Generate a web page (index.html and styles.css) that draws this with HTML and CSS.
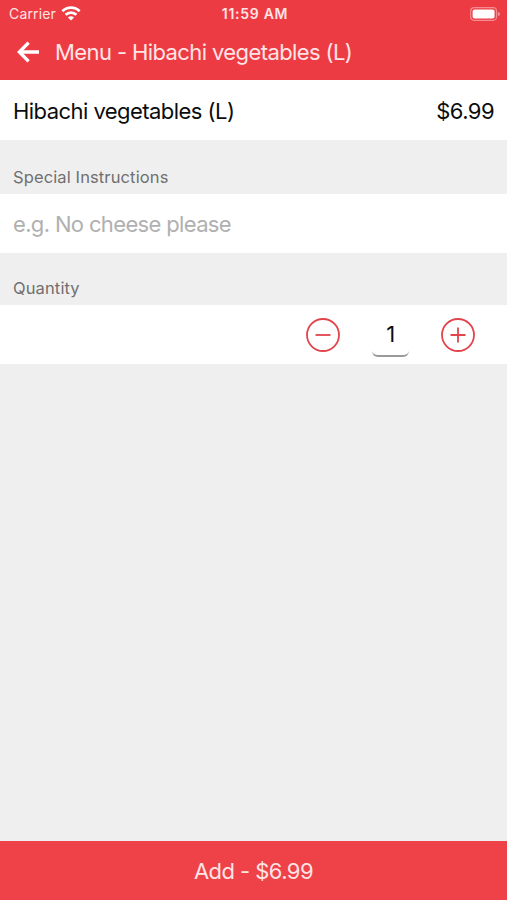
FILE: index.html
```html
<!DOCTYPE html>
<html lang="en">
<head>
    <meta charset="UTF-8">
    <meta name="viewport" content="width=device-width, initial-scale=1.0">
    <title>Menu - Hibachi vegetables (L)</title>
    <link rel="stylesheet" href="styles.css">
</head>
<body>
    <div class="screen">
        <header>
            <div class="status-bar">
                <div class="carrier">
                    <span>Carrier</span>
                    <svg class="wifi" width="20" height="15" viewBox="0 0 20 15" fill="none" stroke="#fff" stroke-width="2.7">
                        <path d="M1.4 5.2A12.3 12.3 0 0 1 18.6 5.2"/>
                        <path d="M4.6 8.8A7.8 7.8 0 0 1 15.4 8.8"/>
                        <path d="M10 14.5L6.9 11.5A4.4 4.4 0 0 1 13.1 11.5Z" fill="#fff" stroke="none"/>
                    </svg>
                </div>
                <span class="time">11:59 AM</span>
                <svg class="battery" width="31" height="14" viewBox="0 0 31 14">
                    <rect x="0.7" y="0.7" width="25.8" height="12.6" rx="3.5" fill="none" stroke="#f58c91" stroke-width="1.2"/>
                    <rect x="2.6" y="2.4" width="22" height="9.2" rx="2" fill="#fff"/>
                    <path d="M27.8 4.7Q30.2 5.6 30.2 7T27.8 9.3Z" fill="#f58c91"/>
                </svg>
            </div>
            <div class="nav-bar">
                <svg class="back" width="24" height="22" viewBox="0 0 24 22" fill="none" stroke="#fff" stroke-width="3.4">
                    <path d="M11.6 1.6L2.4 11L11.6 20.4M3 11H22"/>
                </svg>
                <h1>Menu - Hibachi vegetables (L)</h1>
            </div>
        </header>

        <main>
            <div class="row item">
                <span class="item-name">Hibachi vegetables (L)</span>
                <span class="item-price">$6.99</span>
            </div>

            <label class="label instructions-label" for="instructions">Special Instructions</label>
            <div class="row">
                <input type="text" id="instructions" class="instructions" placeholder="e.g. No cheese please">
            </div>

            <div class="label quantity-label">Quantity</div>
            <div class="row quantity">
                <button class="qty-btn" aria-label="Decrease">
                    <svg width="34" height="34" viewBox="0 0 34 34" fill="none" stroke="#e2444c" stroke-width="1.8">
                        <circle cx="17" cy="17" r="16"/>
                        <path d="M9.5 17H24.5"/>
                    </svg>
                </button>
                <span class="qty-value">1</span>
                <button class="qty-btn" aria-label="Increase">
                    <svg width="34" height="34" viewBox="0 0 34 34" fill="none" stroke="#e2444c" stroke-width="1.8">
                        <circle cx="17" cy="17" r="16"/>
                        <path d="M9.5 17H24.5M17 9.5V24.5"/>
                    </svg>
                </button>
            </div>
        </main>

        <button class="add-btn">Add - $6.99</button>
    </div>
</body>
</html>
```
FILE: styles.css
```css
:root {
    --primary-color: #ed3b43;
    --button-color: #ee4148;
    --bg-color: #efefef;
    --text-color: #0c0c0c;
    --label-color: #707070;
    --placeholder-color: #b0b0b0;
}

* {
    box-sizing: border-box;
}

body {
    margin: 0;
    background-color: var(--bg-color);
    color: var(--text-color);
    font-family: Inter, Roboto, sans-serif;
    font-size: 22px;
    letter-spacing: -0.55px;
}

button {
    border: none;
    padding: 0;
    background: none;
    font: inherit;
    letter-spacing: inherit;
    cursor: pointer;
}

svg {
    display: block;
}

.screen {
    display: flex;
    flex-direction: column;
    height: 900px;
}

header {
    height: 80px;
    background-color: var(--primary-color);
    color: #ffe4e5;
}

.status-bar {
    display: grid;
    grid-template-columns: 1fr auto 1fr;
    align-items: center;
    height: 27px;
    padding: 0 6px 0 9px;
}

.carrier {
    display: flex;
    align-items: center;
    gap: 5px;
    font-size: 14px;
    letter-spacing: 0.15px;
}

.time {
    font-size: 14px;
    font-weight: 600;
    letter-spacing: 0.7px;
}

.battery {
    justify-self: end;
}

.nav-bar {
    display: flex;
    align-items: center;
    gap: 14px;
    height: 50px;
    padding-left: 17px;
}

h1 {
    margin: 0;
    font-size: 22px;
    font-weight: 400;
    letter-spacing: -0.6px;
}

main {
    flex: 1;
}

.row {
    display: flex;
    align-items: center;
    height: 59px;
    padding: 0 13px;
    background-color: #fff;
}

.item {
    justify-content: space-between;
    height: 60px;
    padding-top: 2px;
}

.label {
    display: flex;
    align-items: flex-end;
    padding: 0 13px 7px;
    color: var(--label-color);
    font-size: 16.5px;
    line-height: 20px;
    letter-spacing: 0.12px;
}

.instructions-label {
    height: 54px;
}

.quantity-label {
    height: 52px;
}

.instructions {
    flex: 1;
    border: none;
    outline: none;
    padding: 0;
    color: var(--text-color);
    font: inherit;
    letter-spacing: -0.65px;
}

.instructions::placeholder {
    color: var(--placeholder-color);
}

.quantity {
    justify-content: flex-end;
    gap: 32px;
    padding-right: 32px;
}

.qty-value {
    width: 37px;
    height: 45px;
    border-bottom: 2px solid #999999;
    border-radius: 6px;
    line-height: 45px;
    text-align: center;
}

.add-btn {
    height: 59px;
    background-color: var(--button-color);
    color: #ffe4e5;
}
```
